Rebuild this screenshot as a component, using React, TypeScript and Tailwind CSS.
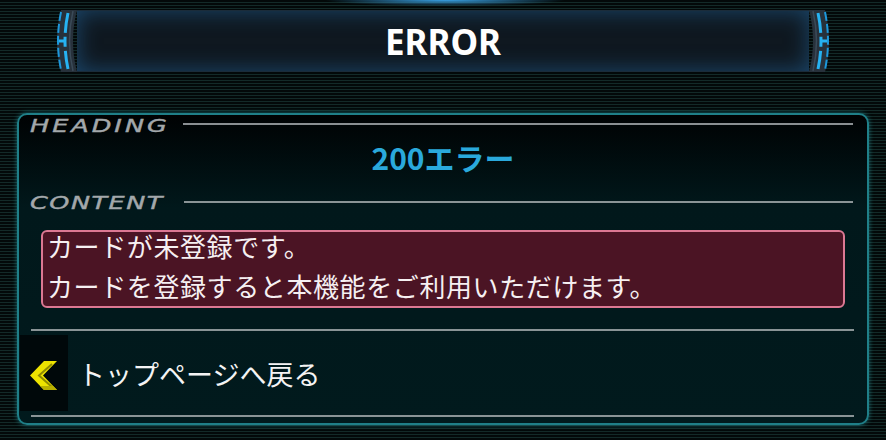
import React from 'react'

const jp = "font-['Noto_Sans_CJK_JP','Noto_Sans',sans-serif]"

function Cap({ flip }: { flip?: boolean }) {
  return (
    <svg width="22" height="62" viewBox="0 0 22 62" className={flip ? '-scale-x-100' : ''}>
      <path d="M6 0 Q-2 31 6 62 L22 62 Q14 31 22 0 Z" fill="#27313b" />
      <path d="M6 2 Q0 31 6 60" stroke="#1c98dc" strokeWidth="2" fill="none" strokeDasharray="9 3" />
      <path d="M13 3 Q7 31 13 59" stroke="#26b2f2" strokeWidth="3" fill="none" strokeDasharray="20 4 10 4 40" />
      <path d="M4 31 L11 31" stroke="#26b2f2" strokeWidth="3" />
      <path d="M18 1 Q11 31 18 61" stroke="#3a4a58" strokeWidth="1.5" fill="none" />
    </svg>
  )
}

function Label({ text, w, track }: { text: string; w: string; track: string }) {
  return (
    <div className={`${w} shrink-0 overflow-visible`}>
      <span className={`inline-block origin-left scale-x-[1.5] font-['DejaVu_Sans',sans-serif] text-[17px] italic leading-none ${track} text-[#a3a8ab] [-webkit-text-stroke:0.4px_#a3a8ab]`}>
        {text}
      </span>
    </div>
  )
}

function Chevron() {
  return (
    <svg width="28" height="29" viewBox="0 0 28 29">
      <polygon points="27,0 14,0 0,14.5 14,29 27,29 13,14.5" fill="#ede300" />
      <polyline points="22,3 9,14.5 22,26" stroke="#8f8a00" strokeWidth="2" fill="none" />
      <polygon points="27,29 14,29 10,25 23,25" fill="#b8b000" />
    </svg>
  )
}

export default function App() {
  return (
    <div className="flex h-[440px] w-[886px] flex-col overflow-hidden bg-[image:radial-gradient(ellipse_120px_6px_at_445px_0px,rgba(60,170,240,0.95),transparent),repeating-linear-gradient(180deg,#030909_0px,#030909_2px,#132a28_2px,#132a28_3px)]">
      {/* Title bar */}
      <div className="mx-[55px] mt-[10px] flex h-[62px] items-stretch">
        <Cap />
        <div className="flex flex-1 items-center justify-center border-y border-[#1b2c3a] bg-[#0f1820] shadow-[inset_0_0_22px_rgba(40,120,185,0.5)]">
          <span className="font-['Noto_Sans',sans-serif] text-[35px] font-bold leading-none text-white">ERROR</span>
        </div>
        <Cap flip />
      </div>

      {/* Panel */}
      <div className="mx-[17px] mt-[41px] flex h-[312px] flex-col rounded-[10px] border-2 border-[#1f7f88] bg-[image:linear-gradient(180deg,#000203_0%,#01181b_30%,#011a1d_100%)] shadow-[0_0_5px_rgba(40,180,190,0.55)]">
        <div className="flex h-[22px] items-center pl-[11px] pr-[14px]">
          <Label text="HEADING" w="w-[153px]" track="tracking-[2px]" />
          <div className="mb-[4px] h-[2px] flex-1 bg-[#8a8f92]" />
        </div>
        <div className={`flex h-[40px] items-center justify-center ${jp} text-[30px] font-bold leading-none text-[#2aa9dc]`}>
          200エラー
        </div>
        <div className="mt-[13px] flex h-[26px] items-center pl-[11px] pr-[14px]">
          <Label text="CONTENT" w="w-[154px]" track="tracking-[1px]" />
          <div className="mb-[3px] h-[2px] flex-1 bg-[#8a9496]" />
        </div>
        <div className={`mx-[22px] mt-[14px] h-[78px] overflow-visible rounded-[6px] border-2 border-[#dc7893] bg-[#4b1424] px-[4px] ${jp} text-[26px] leading-[40px] tracking-[0.6px] text-[#f6f0f2]`}>
          <div className="-mt-[6px]">
            <p>カードが未登録です。</p>
            <p>カードを登録すると本機能をご利用いただけます。</p>
          </div>
        </div>
        <div className="ml-[12px] mr-[13px] mt-[21px] h-[2px] bg-[#8a9496]" />
        <div className="flex h-[84px] items-center py-[4px]">
          <div className="ml-[1px] flex h-full w-[48px] items-center bg-[#00080a] pl-[10px] pt-[5px]">
            <Chevron />
          </div>
          <span className={`ml-[10px] ${jp} text-[27px] leading-none text-[#f4f4f4]`}>トップページへ戻る</span>
        </div>
        <div className="ml-[12px] mr-[13px] h-[2px] bg-[#8a9496]" />
      </div>
    </div>
  )
}
